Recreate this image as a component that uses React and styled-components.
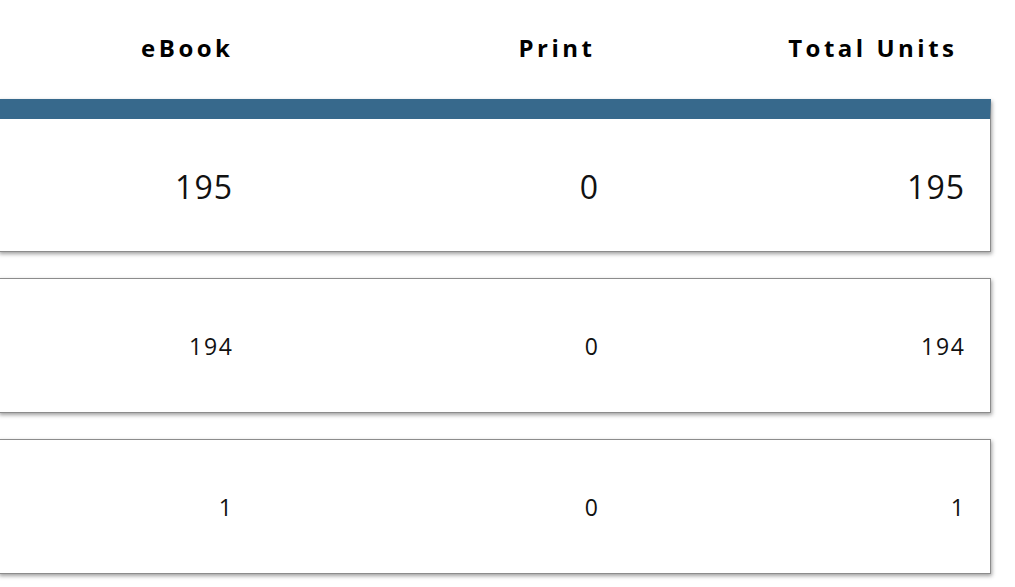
import React from 'react';
import styled, { createGlobalStyle } from 'styled-components';

const colors = {
  blue: '#37698c',
  border: '#8c8c8c',
  text: '#111111',
};

const GlobalStyle = createGlobalStyle`
  body {
    margin: 0;
    background: #ffffff;
    font-family: "Open Sans", "Noto Sans", sans-serif;
    color: ${colors.text};
  }
`;

const StyledPage = styled.div`
  width: 993px;
  margin-left: -2px;
`;

const StyledGrid = styled.div`
  display: grid;
  grid-template-columns: 233px 1fr 1fr;
  padding-right: 26px;
  align-items: center;
`;

const StyledHeaderRow = styled(StyledGrid)`
  height: 95px;
  padding-bottom: 4px;
  padding-right: 28px;
`;

const StyledHeading = styled.div`
  text-align: right;
  font-size: 24px;
  font-weight: 700;
  letter-spacing: 3.5px;
  margin-right: -3.5px;
  padding-right: ${({ $shift }) => $shift}px;
  color: #000000;
`;

const StyledCard = styled.div`
  border: 1px solid ${colors.border};
  border-top: ${({ $accent }) =>
    $accent ? `20px solid ${colors.blue}` : `1px solid ${colors.border}`};
  box-shadow: 1px 2px 4px rgba(0, 0, 0, 0.38);
  background: #ffffff;
  margin-bottom: 26px;
`;

const StyledCardRow = styled(StyledGrid)`
  height: ${({ $accent }) => ($accent ? 132 : 133)}px;
  padding-top: ${({ $accent }) => ($accent ? 3 : 1)}px;
  box-sizing: border-box;
`;

const StyledValue = styled.div`
  text-align: right;
  font-size: ${({ $big }) => ($big ? 32 : 23)}px;
  letter-spacing: ${({ $big }) => ($big ? 1 : 1.8)}px;
  margin-right: ${({ $big }) => ($big ? -1 : -1.8)}px;
  line-height: 1;
`;

const rows = [
  { ebook: 195, print: 0, total: 195, accent: true },
  { ebook: 194, print: 0, total: 194 },
  { ebook: 1, print: 0, total: 1 },
];

export default function App() {
  return (
    <>
      <GlobalStyle />
      <StyledPage>
        <StyledHeaderRow>
          <StyledHeading $shift={1}>eBook</StyledHeading>
          <StyledHeading $shift={5}>Print</StyledHeading>
          <StyledHeading $shift={9}>Total Units</StyledHeading>
        </StyledHeaderRow>
        {rows.map(({ ebook, print, total, accent }, i) => (
          <StyledCard key={i} $accent={accent}>
            <StyledCardRow $accent={accent}>
              <StyledValue $big={accent}>{ebook}</StyledValue>
              <StyledValue $big={accent}>{print}</StyledValue>
              <StyledValue $big={accent}>{total}</StyledValue>
            </StyledCardRow>
          </StyledCard>
        ))}
      </StyledPage>
    </>
  );
}
